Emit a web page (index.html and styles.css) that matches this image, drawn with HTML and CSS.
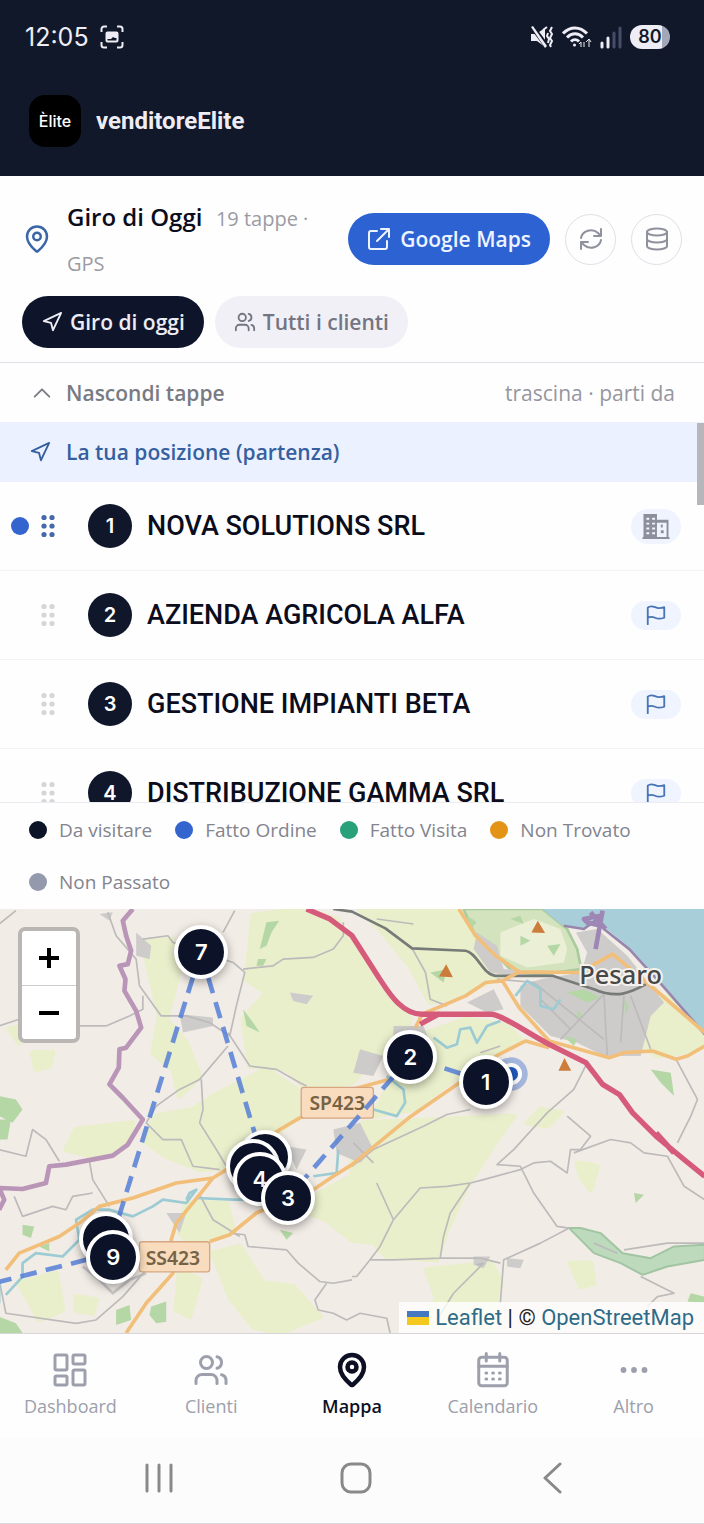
FILE: index.html
```html
<!DOCTYPE html>
<html lang="it">
<head>
<meta charset="utf-8">
<meta name="viewport" content="width=device-width, initial-scale=1">
<title>venditoreElite</title>
<link rel="stylesheet" href="styles.css">
</head>
<body>
<svg class="defs" aria-hidden="true">
  <symbol id="pin" viewBox="0 0 24 24"><path d="M20 10c0 5-5.500 10.200-7.400 11.800a1 1 0 0 1-1.200 0C9.500 20.200 4 15 4 10a8 8 0 0 1 16 0Z"/><circle cx="12" cy="10" r="3"/></symbol>
  <symbol id="nav" viewBox="0 0 24 24"><path d="M3 11 22 2l-9 19-2-8-8-2Z"/></symbol>
  <symbol id="users" viewBox="0 0 24 24"><circle cx="9" cy="7" r="4"/><path d="M2 21v-2a4 4 0 0 1 4-4h6a4 4 0 0 1 4 4v2M22 21v-2a4 4 0 0 0-3-3.870M16 3.130a4 4 0 0 1 0 7.750"/></symbol>
  <symbol id="flag" viewBox="0 0 24 24"><path d="M3 22V4c1-1 2.500-1.500 4-1.500 3 0 5 2 8 2 2 0 4-.3 6-1V15c-2 .7-4 1-6 1-3 0-5-2-8-2-1.500 0-3 .5-4 1"/></symbol>
  <symbol id="grip" viewBox="0 0 14 24"><g fill="currentColor" stroke="none"><circle cx="3" cy="3.500" r="2.600"/><circle cx="11" cy="3.500" r="2.600"/><circle cx="3" cy="12" r="2.600"/><circle cx="11" cy="12" r="2.600"/><circle cx="3" cy="20.500" r="2.600"/><circle cx="11" cy="20.500" r="2.600"/></g></symbol>
</svg>

<header class="top">
  <div class="status">
    <span class="clock">12:05</span>
    <svg class="capture" viewBox="0 0 24 24"><path d="M1.500 7V4a2.500 2.500 0 0 1 2.500-2.500h3M17 1.500h3A2.500 2.500 0 0 1 22.500 4v3M22.500 17v3a2.500 2.500 0 0 1-2.500 2.500h-3M7 22.500H4A2.500 2.500 0 0 1 1.500 20v-3"/><rect x="6.500" y="7.500" width="11" height="9" rx="1"/><path class="solid" d="M7 8h10v5h-2l-2-1-2 2H7z"/></svg>
    <span class="status-icons">
      <svg class="mute" viewBox="0 0 24 24"><path class="solid" d="M1 9h5l9-6v19l-8-6H1z"/><path class="gap" d="M1 0l17 23"/><path class="solid" d="M1 2l2-1 14 20-2 2z"/><path class="buzz" d="M13 5l4-3M22 2l-2 4 2 3-2 4 2 3-2 4 1 2M18 8l-1 3 2 3-1 4"/></svg>
      <svg class="wifi" viewBox="0 0 30 24"><path d="M1 8.500C8 1 18 1 25 8.500M5 12.500c5-5 11-5 16 0M9 16.500c2.500-2.500 5.500-2.500 8 0"/><circle class="solid" cx="12.500" cy="20" r="1.500"/><path class="thin" d="M19 22v-5m-2 2 2-2M22 17v5M27 22v-7m-3 2 3-3 2 3"/></svg>
      <svg class="signal" viewBox="0 0 22 24"><path d="M2 22v-4M8 22v-9"/><path class="dim" d="M14 22V8M20 22V3"/></svg>
      <span class="battery">80</span>
    </span>
  </div>
  <div class="brand"><span class="logo">Èlite</span><h1>venditoreElite</h1></div>
</header>

<main>
  <section class="panel">
    <div class="tour">
      <svg class="icon tour-pin"><use href="#pin"/></svg>
      <p class="tour-text"><strong>Giro di Oggi</strong> <span>19 tappe · GPS</span></p>
      <a class="gmaps" href="#"><svg class="icon" viewBox="0 0 24 24"><path d="M14 2h8v8M22 2 10 14M10 4H4a2 2 0 0 0-2 2v14a2 2 0 0 0 2 2h14a2 2 0 0 0 2-2v-6"/></svg>Google Maps</a>
      <button class="round" aria-label="Aggiorna"><svg class="icon" viewBox="0 0 24 24"><path d="M2 11a10 9 0 0 1 17-5l3 3M22 2v7h-7M22 13a10 9 0 0 1-17 5l-3-3M2 22v-7h7"/></svg></button>
      <button class="round" aria-label="Dati"><svg class="icon" viewBox="0 0 24 24"><ellipse cx="12" cy="5" rx="10" ry="3.500"/><path d="M2 5v14c0 2 4.500 3.500 10 3.500S22 21 22 19V5M2 12c0 2 4.500 3.500 10 3.500S22 14 22 12"/></svg></button>
    </div>
    <div class="tabs">
      <button class="tab active"><svg class="icon"><use href="#nav"/></svg>Giro di oggi</button>
      <button class="tab"><svg class="icon"><use href="#users"/></svg>Tutti i clienti</button>
    </div>
  </section>

  <button class="toggle"><svg class="icon" viewBox="0 0 24 24"><path d="m4 16 8-8 8 8"/></svg><span class="toggle-label">Nascondi tappe</span><span class="hint">trascina · parti da</span></button>

  <div class="stops">
    <div class="start"><svg class="icon"><use href="#nav"/></svg>La tua posizione (partenza)</div>
    <ol>
      <li class="current"><i class="dot blue"></i><svg class="grip"><use href="#grip"/></svg><b class="num">1</b><span class="name">NOVA SOLUTIONS SRL</span><button class="chip tall" aria-label="Azienda"><svg class="building" viewBox="0 0 28 26"><path d="M1 0h14v6h12v18h1v2H0v-2h1zM15 9v15h10V9z" fill-rule="evenodd"/><path class="hole" d="M4 4h3v2H4zM10 4h3v2h-3zM4 9h3v2H4zM10 9h3v2h-3zM4 14h3v2H4zM10 14h3v2h-3zM4 19h3v2H4zM10 19h3v2h-3z"/><path d="M19 11h2v3h-2zM19 17h3v3h-3z"/></svg></button></li>
      <li><i class="dot none"></i><svg class="grip"><use href="#grip"/></svg><b class="num">2</b><span class="name">AZIENDA AGRICOLA ALFA</span><button class="chip" aria-label="Parti da AZIENDA AGRICOLA ALFA"><svg class="icon"><use href="#flag"/></svg></button></li>
      <li><i class="dot none"></i><svg class="grip"><use href="#grip"/></svg><b class="num">3</b><span class="name">GESTIONE IMPIANTI BETA</span><button class="chip" aria-label="Parti da GESTIONE IMPIANTI BETA"><svg class="icon"><use href="#flag"/></svg></button></li>
      <li><i class="dot none"></i><svg class="grip"><use href="#grip"/></svg><b class="num">4</b><span class="name">DISTRIBUZIONE GAMMA SRL</span><button class="chip" aria-label="Parti da DISTRIBUZIONE GAMMA SRL"><svg class="icon"><use href="#flag"/></svg></button></li>
    </ol>
    <div class="thumb"></div>
  </div>

  <ul class="legend">
    <li><i class="dot dark"></i>Da visitare</li>
    <li><i class="dot blue"></i>Fatto Ordine</li>
    <li><i class="dot green"></i>Fatto Visita</li>
    <li><i class="dot orange"></i>Non Trovato</li>
    <li><i class="dot gray"></i>Non Passato</li>
  </ul>

  <section class="map" aria-label="Mappa">
    <svg class="tiles" viewBox="0 0 2112 1269" preserveAspectRatio="xMidYMid slice">
      <g class="field">
        <path d="M430 100 520 90 540 180 500 330 560 400 600 500 540 560 520 480 460 430 480 320Z"/>
        <path d="M760 20 900 0 1010 30 1056 100 1130 230 1230 330 1190 420 1100 470 1056 520 920 540 860 480 750 470 730 330 800 250 740 210Z"/>
        <path d="M640 560 800 480 890 540 900 620 820 680 740 770 600 780 500 740 430 690 470 620 580 600Z"/>
        <path d="M1080 0 1376 0 1440 120 1500 200 1400 250 1290 280 1230 170 1140 60Z"/>
        <path d="M1250 380 1400 330 1520 350 1560 390 1480 430 1360 510 1240 600 1120 620 1180 500Z"/>
        <path d="M1090 640 1330 630 1540 620 1470 720 1400 830 1260 830 1200 900 1160 930 1120 820 1056 870 1056 760Z"/>
        <path d="M1250 850 1400 830 1340 960 1310 1050 1160 1040 1130 1010 1190 930Z"/>
        <path d="M1056 800 1140 830 1170 920 1140 1000 1056 990 980 930 900 900 960 850Z"/>
        <path d="M1280 1080 1470 1060 1500 1110 1470 1260 1250 1240 1310 1170Z"/>
        <path d="M640 1030 720 1010 790 1120 880 1130 960 1220 840 1269 760 1250 690 1160Z"/>
        <path d="M230 660 400 640 380 710 280 740 200 720Z"/>
        <path d="M560 880 680 880 700 960 580 1010 540 970ZM60 1120 170 1090 190 1200 120 1230ZM540 1080 600 1110 570 1220 530 1200ZM230 1160 290 1170 280 1210 230 1200Z"/>
        <path d="M100 430 160 430 150 470 110 480ZM1730 760 1790 770 1770 840 1740 800ZM1710 1060 1770 1060 1780 1120 1740 1130ZM30 360 80 350 60 400Z"/>
        <path d="M1940 300 2000 260 2112 390 2090 420 1970 440 1900 400ZM1580 640 1620 600 1680 610 1640 650Z"/>
      </g>
      <path class="hills" d="M1390 0H1626L1700 60 1730 120 1742 180 1630 195 1540 190 1480 130 1420 70Z"/>
      <path class="hill-field" d="M1500 70 1600 30 1680 60 1700 120 1690 160 1580 175 1500 140Z"/>
      <g class="wood">
        <path d="M0 560 50 570 70 600 40 640 0 620ZM0 630h35l-10 60H0ZM455 1190 500 1175 500 1235 470 1240 450 1215ZM350 1200 390 1185 395 1230 350 1245ZM70 945 105 950 95 985 70 975ZM0 1220 50 1240 70 1269H0ZM120 1010 150 1000 150 1025Z"/>
        <path d="M800 40 838 35 815 70 800 110 780 120ZM775 150 800 150 790 170 770 170ZM730 300 760 340 780 370 740 350ZM1290 190 1340 180 1330 220ZM1950 480 2010 490 2020 560 1980 520ZM2070 1150 2112 1160 2112 1180 2060 1175ZM1900 850 1930 855 1905 880ZM840 960 880 970 860 990ZM1400 20 1430 40 1410 60ZM1560 80 1590 95 1560 110ZM1640 110 1680 105 1660 140ZM1530 30 1560 20 1570 45Z"/>
      </g>
      <path class="corridor" d="M1706 955 1740 955 1800 970 1866 1030 1950 1045 2020 1010 2112 1005V1050L2000 1070 1926 1095 1860 1060 1780 1030Z"/>
      <g class="town">
        <path d="M1726 70 1790 60 1880 140 1990 280 1950 320 1920 440 1810 440 1730 400 1650 380 1560 290 1560 230 1620 210 1742 190 1760 130Z"/>
        <path d="M1430 70 1490 110 1510 180 1560 180 1540 200 1470 190 1420 120ZM1400 280 1480 240 1510 300 1460 310ZM1180 350 1270 350 1290 400 1180 400ZM1080 420 1150 440 1120 500 1060 490Z"/>
        <path d="M410 70 455 110 450 150 410 140ZM540 315 640 325 640 350 550 370ZM870 250 940 260 920 285 880 275ZM1000 660 1080 640 1120 720 1080 760 1010 730ZM860 710 920 720 890 780ZM1420 1040 1470 1040 1450 1075 1420 1065ZM1520 1045 1570 1050 1560 1075 1520 1070ZM500 910 560 910 540 970ZM300 15 340 10 330 35Z"/>
        <path class="scar" d="M250 1070 300 1110 340 1150 390 1110 440 1090"/>
      </g>
      <g class="wood"><path d="M1700 250 1750 240 1800 265 1760 280ZM1730 300 1745 320 1730 335ZM1690 380 1730 390 1720 410ZM1870 270 1885 290 1875 320Z"/></g>
      <path class="sea" d="M1626 0 1680 45 1740 58 1800 45 1886 115 1986 225 2112 372V0Z"/>
      <path class="coast" d="M1690 50 1750 60 1790 30 1810 60 1886 120 1986 230 2112 375"/>
      <path class="harbor" d="M1750 30 1800 20 1800 50 1760 40ZM1806 5 1785 120M1770 10 1815 60"/>
      <g class="minor">
        <path d="M0 45 50 5M325 10 350 80 410 150 420 230 485 320 560 320 630 340 690 380 710 290 735 190 700 160 520 100 505 80 430 90M670 70 705 5M730 180 820 170 850 150 940 145 1000 120 1030 80 1030 40M0 350 60 330 240 350 320 350 390 320 430 300 430 260M685 370 750 470 830 480 900 520 920 530M685 410 600 510 540 540 470 590 440 640 490 690 545 690 580 770 660 780M605 510 610 600 600 640 650 720 680 770M0 720 80 740 100 660 140 690 180 755M270 755 280 810 330 890M45 860 70 920 160 890 200 900 220 860 280 850M600 855 640 930 720 980M0 1110 20 1210 230 1240 290 1230 370 1160 440 1080"/>
        <path d="M690 970 735 975 745 1010 860 1020 895 1060 960 1115 1000 1120 1056 1110M980 1120 945 1170 955 1200 1000 1210 1040 1230 1080 1210 1160 1225 1170 1269"/>
        <path d="M1236 118 1276 190 1290 270 1340 290M1240 45 1130 30M1760 460 1720 540 1640 610 1540 720 1490 765 1560 770 1600 850 1670 950 1706 955 1620 1000 1510 1050 1500 1180M1700 620 1770 680 1740 720 1710 720 1700 790 1650 755 1600 760 1560 780 1450 810 1410 820 1340 830 1260 835 1180 930 1140 1010 1110 1050 1180 1050 1320 1045 1330 980 1350 910 1410 820M1720 730 1830 690 1890 700 1930 730 2000 740 2050 830 2112 870M1056 770 1120 720 1270 650 1340 615 1410 600M1110 1050 1070 1100 1056 1100M1430 1065 1450 1060 1360 1150 1310 1230M2026 450 2090 570 2070 620 2030 700M1130 820 1180 930M1920 1100 2020 1150 1970 1160 1940 1190M1500 1060 1440 1045 1320 1045"/>
        <path d="M1440 430 1500 410M1680 390 1810 255M1810 255 1820 440M1870 260 1860 400M1890 260 1950 420M1490 210 1600 220 1810 390M1710 360 1620 270M1060 700 1120 760M1780 1000 1850 1030M1870 1020 2000 1000 2112 1000"/>
      </g>
      <g class="river">
        <path d="M1300 385 1340 415 1370 405 1380 360 1410 355 1430 400 1460 350 1500 335M1160 500 1210 540 1215 580 1190 620 1120 600M1545 260 1580 215 1620 240 1620 290 1660 300 1680 270M20 1155 70 1100 70 1060 110 1030 190 1040 240 990 230 930 280 900 330 900 400 920 460 890 490 870 560 880 590 840 570 850 560 870M590 865 700 870 770 870M940 800 1010 790 1015 720M0 1120V1180"/>
      </g>
      <path class="rail" d="M1000 0 1056 8 1156 58 1236 118 1396 125C1430 130 1450 200 1486 200H1656L1780 240C1850 270 1890 250 1936 225"/>
      <g class="road">
        <path d="M1376 0 1426 80 1486 140 1556 188 1736 190 1836 135 1956 235 2112 370M1506 215 1556 295 1646 395 1736 420 1826 445 1870 430 1956 425 2026 450 2060 440 2112 410M1556 188 1506 215 1456 220 1396 260 1266 315 1246 355M1646 415 1576 395 1496 435 1356 535 1226 625 1056 765 1000 800 940 840 770 910 690 975 630 995M1166 510 1056 540M980 590 900 625 840 660 680 780 640 805 530 820 400 865 300 890 240 940 180 980 60 1030 20 1080M640 805 600 855 530 940 515 990 520 1090 440 1180 380 1269"/>
      </g>
      <path class="border" d="M400 0 370 35 380 80 395 125 385 165 360 170 378 210 375 245 410 305 425 355 380 415 360 420 358 475 330 525 370 565 430 630 385 705 340 738 200 765 150 770 140 820 70 838 0 835 15 870 0 900"/>
      <path class="motorway" d="M920 0 990 30 1056 80 1136 205C1160 240 1200 315 1266 315H1476C1510 320 1580 370 1646 405L1756 460 1806 525 1856 555 1896 610 1966 680 2056 755 2112 800M1320 312 1260 345M1966 670 2020 730"/>
      <path class="peak" d="M1593 70 1612 35 1634 72ZM1316 202 1338 165 1358 204ZM1674 484 1692 446 1712 484Z"/>
      <g class="shield"><rect x="904" y="534" width="216" height="92" rx="8"/><text x="1012" y="602">SP423</text><rect x="420" y="996" width="210" height="90" rx="8"/><text x="520" y="1064">SS423</text></g>
      <text class="city" x="1860" y="225">Pesaro</text>
      <path class="route" d="M1455 516 1230 444 864 864M603 129 765 672M603 129 339 984M339 1030 0 1116"/>
      <circle class="halo" cx="1532" cy="494" r="50"/><circle class="me" cx="1532" cy="494" r="27"/>
    </svg>
    <div class="pins">
      <button class="marker m6" aria-label="Tappa 6"></button><button class="marker m5" aria-label="Tappa 5"></button><button class="marker m4">4</button><button class="marker m3">3</button>
      <button class="marker m2">2</button><button class="marker m1">1</button><button class="marker m7">7</button><button class="marker m8" aria-label="Tappa 8"></button><button class="marker m9">9</button>
    </div>
    <div class="zoom">
      <button aria-label="Ingrandisci"><svg viewBox="0 0 20 20"><path d="M0 10h20M10 0v20"/></svg></button>
      <button aria-label="Riduci"><svg viewBox="0 0 20 20"><path d="M0 10h20"/></svg></button>
    </div>
    <div class="credit"><svg class="ua" viewBox="0 0 22 14"><path fill="#4478c0" d="M0 0h22v7H0z"/><path fill="#f5c81e" d="M0 6h22v8H0z"/></svg><a href="#">Leaflet</a> | © <a href="#">OpenStreetMap</a></div>
  </section>
</main>

<nav class="tabbar">
  <a href="#"><svg class="icon" viewBox="0 0 24 24"><rect x="2" y="2" width="8" height="10" rx="1"/><rect x="14" y="2" width="8" height="6" rx="1"/><rect x="2" y="16" width="8" height="6" rx="1"/><rect x="14" y="12" width="8" height="10" rx="1"/></svg>Dashboard</a>
  <a href="#"><svg class="icon"><use href="#users"/></svg>Clienti</a>
  <a href="#" class="on"><svg class="icon"><use href="#pin"/></svg>Mappa</a>
  <a href="#"><svg class="icon" viewBox="0 0 24 24"><rect x="2.500" y="3.500" width="19" height="19" rx="2"/><path d="M7.500 1v5M16.500 1v5M2.500 9.500h19M7.300 14h.5M11.800 14h.5M16.300 14h.5M7.300 18h.5M11.800 18h.5M16.300 18h.5"/></svg>Calendario</a>
  <a href="#"><svg class="icon dots" viewBox="0 0 24 24"><circle cx="3" cy="12" r="2.500"/><circle cx="12" cy="12" r="2.500"/><circle cx="21" cy="12" r="2.500"/></svg>Altro</a>
</nav>
<div class="system">
  <button aria-label="Recenti"><svg viewBox="0 0 32 32"><path d="M4 3v26M16 3v26M28 3v26"/></svg></button>
  <button aria-label="Home"><svg viewBox="0 0 32 32"><rect x="2" y="2" width="28" height="28" rx="9"/></svg></button>
  <button aria-label="Indietro"><svg viewBox="0 0 32 32"><path d="M23 2 8 16l15 14"/></svg></button>
</div>
</body>
</html>
```
FILE: styles.css
```css
* { box-sizing: border-box; }
body {
  margin: 0;
  min-height: 100vh;
  display: flex;
  flex-direction: column;
  background: #fefefe;
  color: #0b0d1c;
  font-family: "Open Sans", "Noto Sans", sans-serif;
  font-size: 21px;
}
main { flex: 1; display: flex; flex-direction: column; }
button { font: inherit; color: inherit; border: 0; background: none; padding: 0; margin: 0; cursor: pointer; }
a { color: inherit; text-decoration: none; }
ul, ol { list-style: none; margin: 0; padding: 0; }
svg { flex: none; }
.defs { position: absolute; width: 0; height: 0; }
.icon { width: 24px; height: 24px; fill: none; stroke: currentColor; stroke-width: 2; stroke-linecap: round; stroke-linejoin: round; }

.top { background: #11182a; color: #eeedf5; }
.status { height: 74px; padding: 0 34px 0 25px; display: flex; align-items: center; gap: 11px; }
.status svg { fill: none; stroke: #eeedf5; stroke-width: 2; }
.status .solid { fill: #eeedf5; stroke: none; }
.clock { font: 400 25px Inter, sans-serif; }
.capture { width: 24px; height: 24px; }
.status-icons { margin-left: auto; display: flex; align-items: center; gap: 8px; }
.mute { width: 24px; height: 24px; }
.mute .gap { stroke: #11182a; stroke-width: 5; }
.wifi { width: 30px; height: 24px; }
.wifi path { stroke-width: 3; }
.wifi .thin { stroke-width: 1; }
.signal { width: 22px; height: 24px; }
.signal path { stroke-width: 3; stroke-linecap: round; }
.signal .dim { stroke: #464d68; }
.battery { width: 40px; height: 24px; border-radius: 12px; background: linear-gradient(90deg, #eeedf5 80%, #a3a7b8 80%); color: #11182a; font: 600 18px/24px Inter, sans-serif; text-align: center; }
.brand { padding: 21px 29px 29px; display: flex; align-items: center; gap: 15px; }
.logo { width: 52px; height: 52px; border-radius: 16px; background: #000; display: grid; place-items: center; font: 500 16px Inter, sans-serif; color: #fff; }
.brand h1 { margin: 0; font: 700 24px Roboto, sans-serif; }

.panel { padding: 18px 22px 14px; border-bottom: 1px solid #dfe1e8; display: flex; flex-direction: column; gap: 12px; }
.tour { display: flex; align-items: center; gap: 15px; }
.tour-pin { width: 30px; height: 30px; color: #3a66a8; }
.tour-text { flex: 1; margin: 0; height: 90px; line-height: 45px; }
.tour-text strong { font-size: 24px; font-weight: 600; margin-right: 8px; }
.tour-text span { font-size: 20px; color: #9b9ba3; }
.gmaps { height: 52px; padding: 0 19px; border-radius: 26px; background: #2c62d2; color: #edf4ff; display: flex; align-items: center; gap: 9px; font-weight: 600; }
.round { width: 51px; height: 51px; border: 1px solid #e0dfe8; border-radius: 50%; display: grid; place-items: center; color: #8f929c; }
.tabs { display: flex; gap: 11px; }
.tab { height: 52px; padding: 0 19px; border-radius: 26px; background: #f1f0f6; color: #737582; display: flex; align-items: center; gap: 7px; font-weight: 600; }
.tab .icon { width: 22px; height: 22px; }
.tab.active { background: #0e152a; color: #eeedf5; }

.toggle { height: 59px; padding: 0 29px 0 31px; display: flex; align-items: center; text-align: left; gap: 13px; color: #787a84; }
.toggle .icon { width: 22px; height: 22px; }
.toggle-label { font-weight: 600; }
.hint { margin-left: auto; color: #96969e; }

.stops { position: relative; max-height: 380px; overflow: hidden; }
.start { height: 60px; padding: 0 29px; background: #ebf1fe; color: #365f9f; display: flex; align-items: center; gap: 15px; font-weight: 600; }
.start .icon { width: 22px; height: 22px; }
.stops li { height: 89px; padding: 0 23px 0 11px; border-bottom: 1px solid #f3f3f6; display: flex; align-items: center; }
.dot { width: 18px; height: 18px; border-radius: 50%; flex: none; }
.none { visibility: hidden; }
.blue { background: #3465cf; }
.dark { background: #0c1428; }
.green { background: #28a079; }
.orange { background: #e39418; }
.gray { background: #929aac; }
.grip { width: 14px; height: 24px; margin: 0 33px 0 12px; color: #d5d5da; }
.current .grip { color: #4468ab; }
.num { width: 44px; height: 44px; border-radius: 50%; background: #10172b; color: #fff; font: 600 20px/44px Inter, sans-serif; text-align: center; }
.name { flex: 1; padding-left: 15px; font: 500 27px Roboto, sans-serif; }
.chip { width: 50px; height: 29px; border-radius: 15px; background: #eff4ff; color: #4874b5; display: grid; place-items: center; }
.chip .icon { width: 22px; height: 22px; }
.chip.tall { height: 35px; border-radius: 18px; }
.building { width: 28px; height: 25px; fill: #8d909c; }
.building .hole { fill: #f3f6ff; }
.thumb { position: absolute; right: 0; top: 1px; width: 7px; height: 82px; background: #b7b7bb; }

.legend { border-top: 1px solid #ececf0; padding: 1px 29px; display: flex; flex-wrap: wrap; column-gap: 23px; color: #83848e; font-size: 19px; }
.legend li { height: 52px; display: flex; align-items: center; gap: 12px; }

.map { position: relative; flex: 1; min-height: 423px; overflow: hidden; background: #f2ece6; border-bottom: 1px solid #d5d5da; }
.tiles { position: absolute; width: 100%; height: 100%; }
.tiles path { fill: none; stroke-linejoin: round; }
.tiles .field path { fill: #e9efcb; stroke: #e9efcb; stroke-width: 16; }
.tiles .hills { fill: #d3e3be; stroke: #a8cc9d; stroke-width: 8; }
.tiles .hill-field { fill: #ebefd6; }
.tiles .wood path { fill: #b4d7a5; }
.tiles .corridor { fill: #bddabd; stroke: #a1c5a2; stroke-width: 6; }
.tiles .town path { fill: #cecccb; }
.tiles .town .scar { fill: none; stroke: #c9c7c8; stroke-width: 8; }
.tiles .sea { fill: #a8cfd9; }
.tiles .coast { stroke: #9886ad; stroke-width: 8; }
.tiles .harbor { stroke: #9f87b5; stroke-width: 14; }
.tiles .minor path { stroke: #bdbabb; stroke-width: 5; }
.tiles .river path { stroke: #9ccbd3; stroke-width: 8; }
.tiles .rail { stroke: #777b78; stroke-width: 8; }
.tiles .road path { stroke: #f2bf7b; stroke-width: 11; }
.tiles .border { stroke: #b995b8; stroke-width: 14; }
.tiles .motorway { stroke: #d65b7b; stroke-width: 16; }
.tiles .peak { fill: #cd7d3b; }
.shield rect { fill: #f8dcbd; stroke: #d6a680; stroke-width: 4; }
.shield text { font: 600 58px "Noto Sans", sans-serif; fill: #766246; text-anchor: middle; }
.city { font: 500 76px "Noto Sans", sans-serif; fill: #474747; stroke: #f5f1ed; stroke-width: 12; paint-order: stroke; text-anchor: middle; }
.tiles .route { stroke: #557fd6; stroke-opacity: .85; stroke-width: 14; stroke-dasharray: 50 28; }
.halo { fill: #5580d2; fill-opacity: .5; }
.me { fill: #2059be; stroke: #fff; stroke-width: 12; }
.marker { position: absolute; width: 54px; height: 54px; transform: translate(-50%, -50%); border: 4px solid #fff; border-radius: 50%; background: #0c1329; color: #fff; font: 600 22px Inter, sans-serif; text-align: center; box-shadow: 0 3px 10px rgba(0, 0, 0, .35); }
.m1 { left: 69%; top: 40.700%; }
.m2 { left: 58.300%; top: 35%; }
.m3 { left: 40.900%; top: 68.100%; }
.m4 { left: 36.900%; top: 63.600%; }
.m5 { left: 36%; top: 60.500%; }
.m6 { left: 37.600%; top: 58.400%; }
.m7 { left: 28.600%; top: 10.200%; }
.m8 { left: 15.100%; top: 77.800%; }
.m9 { left: 16.100%; top: 82%; }
.zoom { position: absolute; left: 18px; top: 18px; border: 4px solid #b9b6b3; border-radius: 7px; background: #fff; display: flex; flex-direction: column; }
.zoom button { width: 54px; height: 54px; display: grid; place-items: center; }
.zoom button + button { border-top: 1px solid #ccc; }
.zoom svg { width: 20px; height: 20px; stroke: #000; stroke-width: 4; }
.credit { position: absolute; right: 0; bottom: 0; height: 31px; padding: 0 10px 0 8px; background: rgba(255, 255, 255, .8); font: 400 22px/31px Roboto, sans-serif; color: #222; }
.credit a { color: #2e6b87; }
.ua { width: 22px; height: 14px; margin-right: 6px; }

.tabbar { height: 103px; padding: 18px 0 0; display: grid; grid-template-columns: repeat(5, 1fr); }
.tabbar a { display: flex; flex-direction: column; align-items: center; gap: 6px; font-size: 18px; line-height: 24px; font-weight: 500; color: #9da0ac; }
.tabbar .icon { width: 36px; height: 36px; }
.tabbar .dots { fill: currentColor; stroke: none; width: 28px; }
.tabbar .on { color: #0d1024; font-weight: 600; }
.tabbar .on .icon { stroke-width: 3; }
.system { height: 87px; padding: 0 53px 4px 60px; border-bottom: 1px solid #d8d8dc; background: #fcfcfd; display: grid; grid-template-columns: repeat(3, 1fr); align-items: center; }
.system button { display: grid; place-items: center; }
.system svg { width: 32px; height: 32px; fill: none; stroke: #8a8989; stroke-width: 3; stroke-linecap: round; stroke-linejoin: round; }
```
